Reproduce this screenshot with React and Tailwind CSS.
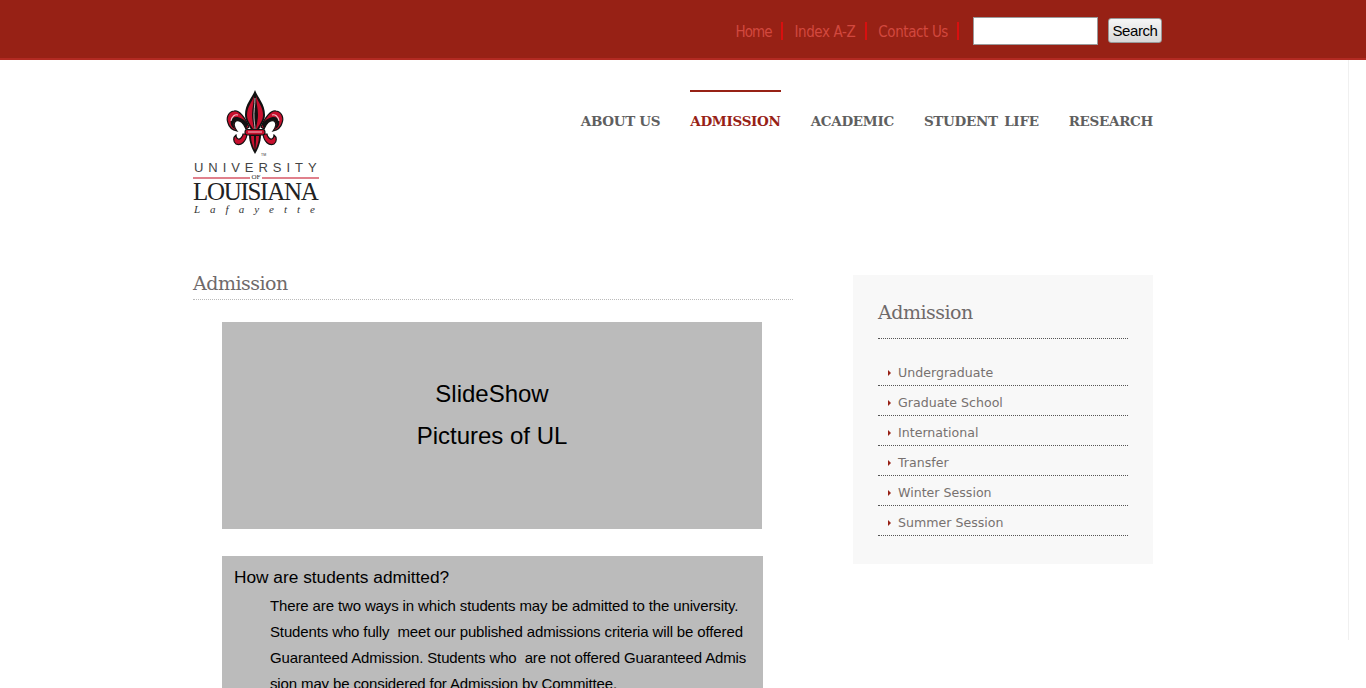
const items = ["Undergraduate", "Graduate School", "International", "Transfer", "Winter Session", "Summer Session"];

function FleurSide() {
  return (
    <g>
      <path d="M25 37C21 27 15 20 10 21C4 22 2 28 4 33C5 37 9 40 13 41C10 37 9 33 12 31C16 29 20 34 22 39Z" fill="#c8102e" stroke="#111" strokeWidth="1.2" />
      <path d="M24 34C20 29 16 27 12 27C8 27 6 30 7 35C8 37 9 38 11 39C9 35 9 32 12 31C16 29 20 34 22 39Z" fill="#111" />
      <path d="M7 31C8 26 11 24 14 25" fill="none" stroke="#f3c4cb" strokeWidth="1.1" />
      <path d="M23 44C22 52 17 56 12 54C9 52 9 47 12 45C12 49 15 50 17 48C18 47 19 45 19 44Z" fill="#c8102e" stroke="#111" strokeWidth="1.2" />
    </g>
  );
}

function Fleur() {
  return (
    <svg width="58" height="66" viewBox="2 0 58 66" className="block">
      <FleurSide />
      <g transform="translate(62,0) scale(-1,1)">
        <FleurSide />
      </g>
      <path d="M31 0C34 8 41 14 41 25C41 31 36 36 35 40H27C26 36 21 31 21 25C21 14 28 8 31 0Z" fill="#111" />
      <path d="M30 6C28 12 23 17 23 25C23 31 27 35 29 39H30C29 33 28 29 28 25C28 18 30 12 30 6Z" fill="#c8102e" />
      <path d="M32 6C34 12 39 17 39 25C39 31 35 35 33 39H32C33 33 34 29 34 25C34 18 32 12 32 6Z" fill="#c8102e" />
      <path d="M31 8C31 16 29.5 22 30 28C30.2 32 31 36 31 39" fill="none" stroke="#f5e0e3" strokeWidth="0.8" />
      <path d="M25 45H37C37 52 34 59 31 64C28 59 25 52 25 45Z" fill="#111" />
      <path d="M27 46H30C30 52 30.5 56 30.5 60C29 56 27 52 27 46Z" fill="#c8102e" />
      <path d="M35 46H32C32 52 31.5 56 31.5 60C33 56 35 52 35 46Z" fill="#c8102e" />
      <rect x="21" y="39.5" width="20" height="5.5" rx="2.5" fill="#c8102e" stroke="#111" strokeWidth="1.1" />
      <rect x="24" y="41.5" width="14" height="1" fill="#f3c4cb" />
      <text x="37" y="66" fontSize="3.5" fontFamily="Liberation Sans, sans-serif" fill="#333">TM</text>
    </svg>
  );
}

function Logo() {
  return (
    <div className="flex w-[126px] flex-col">
      <div className="ml-[33px]"><Fleur /></div>
      <div className="ml-[1px] mt-[5px] whitespace-nowrap font-['Liberation_Sans',sans-serif] text-[13px] leading-[14px] tracking-[4.95px] text-[#444]">UNIVERSITY</div>
      <div className="flex h-[5px] items-center">
        <div className="h-[2px] flex-1 bg-[#e0808c]" />
        <span className="px-[2px] font-['Liberation_Serif',serif] text-[7px] leading-[5px] text-[#333]">OF</span>
        <div className="h-[2px] flex-1 bg-[#e0808c]" />
      </div>
      <div className="mt-[2px] whitespace-nowrap font-['Liberation_Serif',serif] text-[25px] leading-[20px] tracking-[-1.3px] text-[#222]">LOUISIANA</div>
      <div className="ml-[1px] mt-[1px] whitespace-nowrap font-['Liberation_Serif',serif] text-[11px] italic leading-[12px] tracking-[10px] text-[#333]">Lafayette</div>
    </div>
  );
}

export default function App() {
  return (
    <div className="relative h-[688px] overflow-hidden bg-white">
      <div className="absolute bottom-[48px] left-[1348px] top-[60px] w-px bg-[#f0f0f0]" />
      <header className="flex h-[60px] items-start justify-end border-b-2 border-[#b22a22] bg-[#972115] pr-[204px] pt-[16px] font-['DejaVu_Sans_Condensed','Open_Sans',sans-serif] text-[15px] tracking-[-0.4px] text-[#d2483e]">
        <nav className="mt-[6px] flex items-center">
          <a className="border-r-2 border-[#d90f0f] pr-[10px] pt-[3px] leading-[15px] tracking-[-1px]">Home</a>
          <a className="border-r-2 border-[#d90f0f] pl-[11px] pr-[10px] pt-[3px] leading-[15px]">Index A-Z</a>
          <a className="border-r-2 border-[#d90f0f] pl-[11px] pr-[9px] pt-[3px] leading-[15px]">Contact Us</a>
        </nav>
        <div className="ml-[14px] mt-[1px] h-[28px] w-[125px] border border-[#9a9a9a] bg-white" />
        <button className="ml-[10px] mt-[2px] h-[25px] w-[54px] rounded-[3px] border border-[#999] bg-gradient-to-b from-[#f6f6f6] to-[#d8d8d8] font-['Liberation_Sans',sans-serif] text-[15px] leading-none tracking-[-0.4px] text-black">Search</button>
      </header>

      <div className="ml-[193px] w-[960px]">
        <div className="flex items-start justify-between pt-[30px]">
          <Logo />
          <nav className="flex gap-[30px] font-['DejaVu_Serif',serif] text-[13.5px] font-bold tracking-[-0.3px] text-[#5f5f5f]">
            <a className="border-t-2 border-transparent pt-[20px] leading-[18px]">ABOUT US</a>
            <a className="border-t-2 border-[#972115] pt-[20px] leading-[18px] text-[#972115]">ADMISSION</a>
            <a className="border-t-2 border-transparent pt-[20px] leading-[18px]">ACADEMIC</a>
            <a className="border-t-2 border-transparent pt-[20px] leading-[18px] [word-spacing:2px]">STUDENT LIFE</a>
            <a className="border-t-2 border-transparent pt-[20px] leading-[18px]">RESEARCH</a>
          </nav>
        </div>

        <div className="mt-[60px] flex items-start justify-between">
          <main className="w-[600px]">
            <h1 className="border-b border-dotted border-[#bbb] pb-[8px] font-['DejaVu_Serif',serif] text-[19px] font-normal leading-[16px] tracking-[-0.5px] text-[#6f6a6a]">Admission</h1>
            <div className="ml-[29px] mt-[22px] flex h-[207px] w-[540px] flex-col items-center bg-[#bbbbbb] pt-[51px] font-['Liberation_Sans',sans-serif] text-[24px] leading-[42px] text-black">
              <p>SlideShow</p>
              <p>Pictures of UL</p>
            </div>
            <div className="ml-[29px] mt-[27px] h-[200px] w-[541px] bg-[#bbbbbb] pl-[12px] pt-[8px] font-['Liberation_Sans',sans-serif] text-black">
              <h2 className="text-[17.3px] font-normal leading-[26px]">How are students admitted?</h2>
              <p className="ml-[36px] mt-[3px] whitespace-pre text-[15px] leading-[26px] tracking-[-0.13px]">
                {"There are two ways in which students may be admitted to the university.\nStudents who fully  meet our published admissions criteria will be offered\nGuaranteed Admission. Students who  are not offered Guaranteed Admis\nsion may be considered for Admission by Committee."}
              </p>
            </div>
          </main>

          <aside className="h-[289px] w-[300px] bg-[#f8f8f8] px-[25px] pt-[22px]">
            <h2 className="border-b border-dotted border-[#555] pb-[11px] font-['DejaVu_Serif',serif] text-[19px] font-normal leading-[30px] tracking-[-0.5px] text-[#6f6a6a]">Admission</h2>
            <ul className="mt-[17px] font-['DejaVu_Sans',sans-serif] text-[12.6px] text-[#77716f]">
              {items.map((t) => (
                <li key={t} className="flex h-[30px] items-center border-b border-dotted border-[#555] pl-[10px] pt-[5px]">
                  <svg width="3" height="6" viewBox="0 0 3 6" className="mr-[7px] shrink-0"><path d="M0 0L3 3L0 6Z" fill="#972115" /></svg>
                  {t}
                </li>
              ))}
            </ul>
          </aside>
        </div>
      </div>
    </div>
  );
}
